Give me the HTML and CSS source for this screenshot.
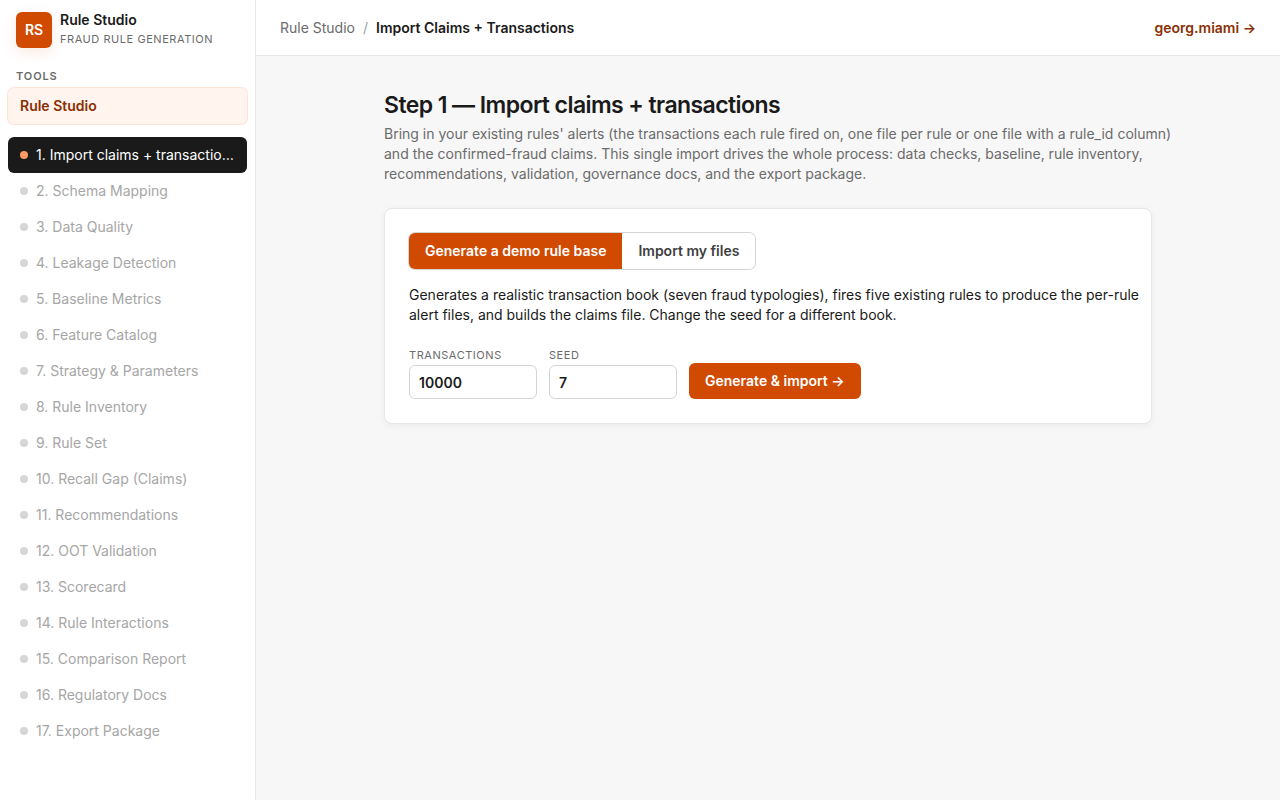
FILE: index.html
```html
<!DOCTYPE html>
<html lang="en">
<head>
<meta charset="utf-8">
<meta name="viewport" content="width=device-width, initial-scale=1">
<title>Rule Studio</title>
<link rel="stylesheet" href="styles.css">
</head>
<body>
<div class="app">
  <aside class="sidebar">
    <div class="brand">
      <div class="brand-mark">RS</div>
      <div>
        <div class="brand-name">Rule Studio</div>
        <div class="brand-sub">Fraud rule generation</div>
      </div>
    </div>
    <div class="section-label">Tools</div>
    <a class="tool" href="#">Rule Studio</a>
    <nav class="steps" aria-label="Steps">
      <a class="step active" href="#" aria-current="step"><span class="dot"></span><span class="step-text">1. Import claims + transactions</span></a>
      <a class="step"><span class="dot"></span><span class="step-text">2. Schema Mapping</span></a>
      <a class="step"><span class="dot"></span><span class="step-text">3. Data Quality</span></a>
      <a class="step"><span class="dot"></span><span class="step-text">4. Leakage Detection</span></a>
      <a class="step"><span class="dot"></span><span class="step-text">5. Baseline Metrics</span></a>
      <a class="step"><span class="dot"></span><span class="step-text">6. Feature Catalog</span></a>
      <a class="step"><span class="dot"></span><span class="step-text">7. Strategy &amp; Parameters</span></a>
      <a class="step"><span class="dot"></span><span class="step-text">8. Rule Inventory</span></a>
      <a class="step"><span class="dot"></span><span class="step-text">9. Rule Set</span></a>
      <a class="step"><span class="dot"></span><span class="step-text">10. Recall Gap (Claims)</span></a>
      <a class="step"><span class="dot"></span><span class="step-text">11. Recommendations</span></a>
      <a class="step"><span class="dot"></span><span class="step-text">12. OOT Validation</span></a>
      <a class="step"><span class="dot"></span><span class="step-text">13. Scorecard</span></a>
      <a class="step"><span class="dot"></span><span class="step-text">14. Rule Interactions</span></a>
      <a class="step"><span class="dot"></span><span class="step-text">15. Comparison Report</span></a>
      <a class="step"><span class="dot"></span><span class="step-text">16. Regulatory Docs</span></a>
      <a class="step"><span class="dot"></span><span class="step-text">17. Export Package</span></a>
    </nav>
  </aside>
  <div class="page">
    <header class="topbar">
      <div class="crumbs">
        <span>Rule Studio</span>
        <span class="slash">/</span>
        <span class="crumb-current">Import Claims + Transactions</span>
      </div>
      <a class="site-link" href="#">georg.miami →</a>
    </header>
    <main class="content">
      <h1>Step 1 — Import claims + transactions</h1>
      <p class="lead">Bring in your existing rules' alerts (the transactions each rule fired on, one file per rule or one file with a rule_id column) and the confirmed-fraud claims. This single import drives the whole process: data checks, baseline, rule inventory, recommendations, validation, governance docs, and the export package.</p>
      <section class="card">
        <div class="toggle">
          <button type="button" class="toggle-btn selected" aria-pressed="true">Generate a demo rule base</button>
          <button type="button" class="toggle-btn" aria-pressed="false">Import my files</button>
        </div>
        <p class="desc">Generates a realistic transaction book (seven fraud typologies), fires five existing rules to produce the per-rule alert files, and builds the claims file. Change the seed for a different book.</p>
        <form class="fields">
          <div class="field">
            <label for="transactions">Transactions</label>
            <input id="transactions" type="text" inputmode="numeric" value="10000">
          </div>
          <div class="field">
            <label for="seed">Seed</label>
            <input id="seed" type="text" inputmode="numeric" value="7">
          </div>
          <button type="button" class="primary">Generate &amp; import →</button>
        </form>
      </section>
    </main>
  </div>
</div>
</body>
</html>
```

FILE: styles.css
```css
* {
  box-sizing: border-box;
}

body {
  margin: 0;
  font-family: Inter, "Liberation Sans", sans-serif;
  font-size: 14px;
  line-height: 20px;
  color: #1a1a1a;
  background: #f7f7f7;
}

a {
  color: inherit;
  text-decoration: none;
}

button,
input {
  font: inherit;
  margin: 0;
}

.app {
  display: flex;
  min-height: 100vh;
}

.sidebar {
  flex: none;
  width: 256px;
  padding: 10px 8px;
  background: #fff;
  border-right: 1px solid #e8e8e8;
}

.brand {
  display: flex;
  align-items: flex-end;
  gap: 8px;
  padding: 0 8px;
}

.brand-mark {
  display: grid;
  place-items: center;
  width: 36px;
  height: 36px;
  border-radius: 6px;
  background: #d04a02;
  color: #fff;
  font-weight: 600;
  box-shadow: 0 4px 14px rgba(208, 74, 2, 0.12);
}

.brand-name {
  font-weight: 600;
}

.brand-sub {
  font-size: 11px;
  line-height: 18px;
  letter-spacing: 0.05em;
  text-transform: uppercase;
  color: #6b6b6b;
}

.section-label {
  margin: 19px 8px 3px;
  font-size: 11px;
  font-weight: 600;
  line-height: 18px;
  letter-spacing: 0.08em;
  text-transform: uppercase;
  color: #6b6b6b;
}

.tool {
  display: block;
  padding: 8px 12px;
  border-radius: 6px;
  background: #fff4ee;
  box-shadow: 0 0 0 1px #ffe3d6;
  color: #8a2f04;
  font-weight: 600;
}

.steps {
  margin-top: 13px;
}

.step {
  display: flex;
  align-items: center;
  gap: 8px;
  padding: 8px 12px;
  border-radius: 6px;
  color: #a6a6a6;
}

.step.active {
  background: #1a1a1a;
  color: #fff;
}

.dot {
  flex: none;
  width: 8px;
  height: 8px;
  border-radius: 50%;
  background: #d6d6d6;
}

.active .dot {
  background: #ff9a66;
}

.step-text {
  overflow: hidden;
  white-space: nowrap;
  text-overflow: ellipsis;
}

.page {
  flex: 1;
  min-width: 0;
}

.topbar {
  display: flex;
  align-items: center;
  justify-content: space-between;
  height: 56px;
  padding: 0 24px;
  background: #fff;
  border-bottom: 1px solid #e8e8e8;
}

.crumbs {
  display: flex;
  gap: 8px;
  color: #6b6b6b;
}

.slash {
  color: #a0a0a0;
}

.crumb-current {
  color: #1a1a1a;
  font-weight: 600;
}

.site-link {
  color: #8a2f04;
  font-weight: 600;
}

.content {
  max-width: 768px;
  margin: 0 auto;
  padding: 32px 0;
}

h1 {
  margin: 0 0 2px;
  font-size: 23px;
  font-weight: 600;
  line-height: 34px;
  letter-spacing: -0.025em;
}

.lead {
  margin: 0 -24px 24px 0;
  color: #6b6b6b;
}

.card {
  padding: 24px;
  background: #fff;
  border: 1px solid #e8e8e8;
  border-radius: 8px;
  box-shadow: 0 2px 8px rgba(0, 0, 0, 0.05);
}

.toggle {
  display: flex;
  width: fit-content;
  border-radius: 6px;
  overflow: hidden;
  box-shadow: 0 0 0 1px #d4d4d4;
}

.toggle-btn {
  padding: 8px 16px;
  border: 0;
  background: #fff;
  color: #404040;
  font-weight: 600;
}

.toggle-btn.selected {
  background: #d04a02;
  color: #fff;
}

.desc {
  margin: 16px -20px 20px 0;
}

.fields {
  display: flex;
  align-items: flex-end;
  gap: 12px;
}

.field {
  width: 128px;
}

.field label {
  display: block;
  font-size: 11px;
  letter-spacing: 0.05em;
  text-transform: uppercase;
  color: #6b6b6b;
}

.field input {
  display: block;
  width: 100%;
  height: 34px;
  padding: 0 9px;
  border: 1px solid #d4d4d4;
  border-radius: 6px;
  background: #fff;
  color: #1a1a1a;
  font-weight: 600;
}

.primary {
  padding: 8px 16px;
  border: 0;
  border-radius: 6px;
  background: #d04a02;
  color: #fff;
  font-weight: 600;
}
```
